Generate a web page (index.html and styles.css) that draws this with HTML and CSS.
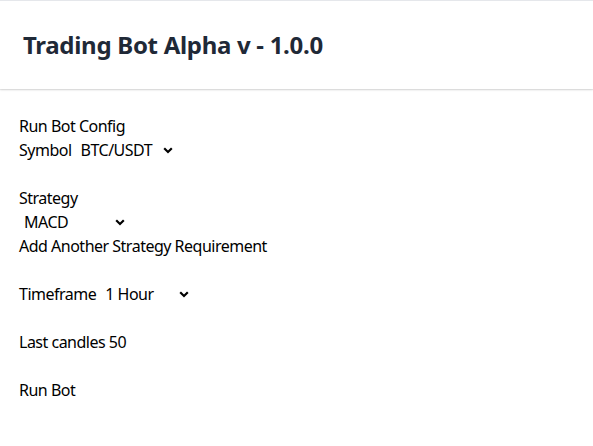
FILE: index.html
```html
<!DOCTYPE html>
<html>
<head>
<meta charset="utf-8">
<link rel="stylesheet" href="styles.css">
</head>
<body>
<header class="topbar">
  <h1 class="title">Trading Bot Alpha v - 1.0.0</h1>
</header>
<main class="content">
  <form class="config">
    <div class="row">Run Bot Config</div>
    <div class="row">
      <label>Symbol</label>
      <select class="sel sel-symbol"><option>BTC/USDT</option></select>
    </div>
    <div class="row gap"></div>
    <div class="row">Strategy</div>
    <div class="row">
      <select class="sel sel-strategy"><option>MACD</option></select>
    </div>
    <div class="row">Add Another Strategy Requirement</div>
    <div class="row gap"></div>
    <div class="row">
      <label>Timeframe</label>
      <select class="sel sel-time"><option>1 Hour</option></select>
    </div>
    <div class="row gap"></div>
    <div class="row">Last candles 50</div>
    <div class="row gap"></div>
    <div class="row">Run Bot</div>
  </form>
</main>
</body>
</html>
```
FILE: styles.css
```css
* { box-sizing: border-box; }
html, body { margin: 0; padding: 0; background: #fff; }
body {
  font-family: "Noto Sans", "Open Sans", sans-serif;
  font-size: 16px;
  line-height: 24px;
  letter-spacing: -0.5px;
  color: #000;
  border-top: 1px solid #e5e7eb;
}
.topbar {
  background: #fff;
  height: 88px;
  display: flex;
  align-items: center;
  padding: 0 23px;
  box-shadow: 0 1px 2px rgba(0,0,0,0.12), 0 1px 1px rgba(0,0,0,0.06);
}
.title {
  margin: 0;
  font-size: 24px;
  line-height: 32px;
  font-weight: 700;
  letter-spacing: -0.3px;
  color: #1f2937;
}
.content {
  padding: 25px 19px;
}
.row {
  display: flex;
  align-items: center;
  height: 24px;
}
.row label { margin-right: 5px; }
.sel {
  appearance: none;
  -webkit-appearance: none;
  border: 0;
  background: transparent url("data:image/svg+xml;utf8,<svg xmlns='http://www.w3.org/2000/svg' width='10' height='7' viewBox='0 0 10 7'><path d='M1.2 1.3 L5 5 L8.8 1.3' fill='none' stroke='black' stroke-width='2.2'/></svg>") no-repeat right 4px center;
  font: inherit;
  letter-spacing: -0.5px;
  color: #000;
  height: 24px;
  padding: 0 4px;
  margin: 0;
}
.sel-symbol { width: 100px; }
.sel-strategy { width: 109px; margin-left: 1px; }
.sel-time { width: 92px; }
```
